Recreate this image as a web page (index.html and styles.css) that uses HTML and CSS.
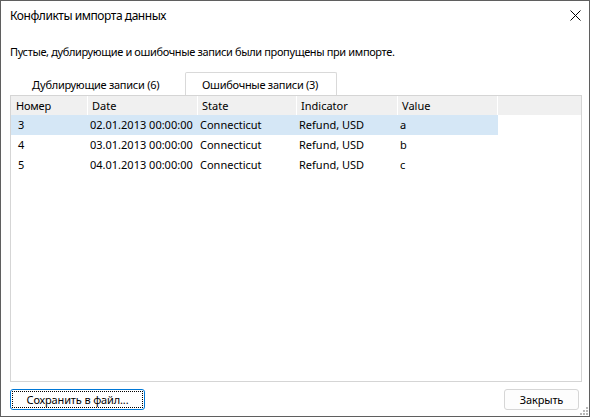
FILE: index.html
```html
<!DOCTYPE html>
<html lang="ru">
<head>
<meta charset="utf-8">
<title>Конфликты импорта данных</title>
<link rel="stylesheet" href="styles.css">
</head>
<body>
<div class="window">
  <div class="titlebar">
    <span class="title">Конфликты импорта данных</span>
    <svg class="close" width="11" height="11" viewBox="0 0 11 11"><path d="M0.5 0.5 L10.5 10.5 M10.5 0.5 L0.5 10.5" stroke="#000" stroke-width="1" fill="none"/></svg>
  </div>
  <div class="desc">Пустые, дублирующие и ошибочные записи были пропущены при импорте.</div>
  <div class="tabs">
    <div class="tab">Дублирующие записи (6)</div>
    <div class="tab active">Ошибочные записи (3)</div>
  </div>
  <div class="frame">
    <div class="grid">
      <div class="hcell c1">Номер</div>
      <div class="hcell">Date</div>
      <div class="hcell">State</div>
      <div class="hcell">Indicator</div>
      <div class="hcell">Value</div>
      <div class="hcell filler"></div>

      <div class="cell c1 sel">3</div>
      <div class="cell sel">02.01.2013 00:00:00</div>
      <div class="cell sel">Connecticut</div>
      <div class="cell sel">Refund, USD</div>
      <div class="cell sel">a</div>
      <div class="cell"></div>

      <div class="cell c1">4</div>
      <div class="cell">03.01.2013 00:00:00</div>
      <div class="cell">Connecticut</div>
      <div class="cell">Refund, USD</div>
      <div class="cell">b</div>
      <div class="cell"></div>

      <div class="cell c1">5</div>
      <div class="cell">04.01.2013 00:00:00</div>
      <div class="cell">Connecticut</div>
      <div class="cell">Refund, USD</div>
      <div class="cell">c</div>
      <div class="cell"></div>
    </div>
  </div>
  <div class="footer">
    <button class="btn focused"><span class="focus">Сохранить в файл...</span></button>
    <button class="btn close-btn">Закрыть</button>
  </div>
  <svg class="grip" width="10" height="10" viewBox="0 0 10 10">
    <rect x="7" y="1" width="2" height="2" fill="#b8b8b8"/>
    <rect x="4" y="4" width="2" height="2" fill="#b8b8b8"/>
    <rect x="7" y="4" width="2" height="2" fill="#b8b8b8"/>
    <rect x="1" y="7" width="2" height="2" fill="#b8b8b8"/>
    <rect x="4" y="7" width="2" height="2" fill="#b8b8b8"/>
    <rect x="7" y="7" width="2" height="2" fill="#b8b8b8"/>
  </svg>
</div>
</body>
</html>
```

FILE: styles.css
```css
* { box-sizing: border-box; }
html, body { margin: 0; padding: 0; background: #fff; }
body {
  font-family: "Noto Sans", "Open Sans", sans-serif;
  font-size: 11px;
  color: #000;
}
.window {
  position: relative;
  width: 590px;
  height: 417px;
  border: 1px solid #5f5f5f;
  background: #fff;
  display: flex;
  flex-direction: column;
}
.titlebar {
  height: 30px;
  display: flex;
  align-items: flex-start;
  justify-content: space-between;
  padding-left: 9px;
}
.title {
  font-size: 12px;
  line-height: 30px;
  letter-spacing: -0.45px;
}
.close {
  margin-top: 9px;
  margin-right: 8px;
}
.desc {
  margin-top: 13px;
  padding-left: 9px;
  line-height: 16px;
  letter-spacing: -0.36px;
}
.tabs {
  margin-top: 12px;
  margin-left: 9px;
  display: flex;
  height: 23px;
  letter-spacing: -0.27px;
}
.tab {
  width: 175px;
  padding-left: 22px;
  padding-top: 2px;
  line-height: 22px;
}
.tab.active {
  width: 152px;
  padding-left: 16px;
  padding-top: 1px;
  background: #fff;
  border: 1px solid #d9d9d9;
  border-bottom: none;
  border-radius: 2px 2px 0 0;
}
.frame {
  margin: 0 7px 0 9px;
  height: 287px;
  border: 1px solid #d5d5d5;
}
.grid {
  display: grid;
  grid-template-columns: 77px 110px 99px 101px 100px 1fr;
  grid-template-rows: 19px 20px 20px 20px;
}
.hcell {
  background: #f0f0f0;
  border-right: 1px solid #fff;
  padding-left: 4px;
  line-height: 19px;
  white-space: nowrap;
}
.hcell.c1 { padding-left: 5px; letter-spacing: -0.2px; }
.hcell.filler { border-right: none; }
.cell {
  padding-left: 2px;
  line-height: 20px;
  white-space: nowrap;
}
.cell.c1 { padding-left: 7px; }
.cell.sel { background: #d5e7f6; }
.footer {
  margin-top: 7px;
  padding: 0 10px 0 9px;
  display: flex;
  justify-content: space-between;
}
.btn {
  font-family: "Noto Sans", "Open Sans", sans-serif;
  font-size: 11px;
  color: #000;
  height: 21px;
  padding: 0;
  background: #fdfdfd;
  border: 1px solid #d6d6d6;
  border-radius: 3px;
  letter-spacing: -0.15px;
}
.btn.focused {
  width: 135px;
  border-color: #0078d7;
  background: #fff;
  padding: 1px;
}
.focus {
  display: block;
  height: 17px;
  line-height: 15px;
  border: 1px dotted #000;
}
.close-btn {
  width: 75px;
  line-height: 19px;
}
.grip {
  position: absolute;
  right: 0;
  bottom: 0;
}
```
